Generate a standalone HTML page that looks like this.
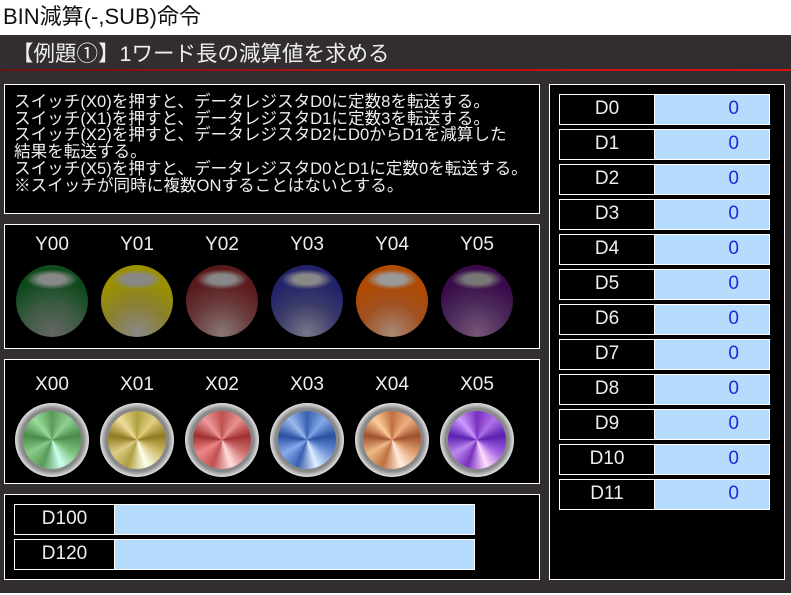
<!DOCTYPE html>
<html><head><meta charset="utf-8"><style>
*{margin:0;padding:0;box-sizing:border-box}
body{width:791px;height:595px;background:#fff;position:relative;overflow:hidden;font-family:"Liberation Sans","Noto Sans CJK JP",sans-serif}
.a{position:absolute}
#top{left:3px;top:3px;font-size:22px;color:#111;line-height:28px}
#bar{left:0;top:35px;width:791px;height:558px;background:#312d30}
#h{left:12px;top:40px;font-size:21.5px;color:#eee;line-height:28px}
#red{left:0;top:69px;width:791px;height:2px;background:linear-gradient(90deg,#6a1010,#b01010 40%,#e01010)}
.p{background:#000;border:1.5px solid #fff}
#txt{left:14px;top:94px;color:#eee;font-size:16.6px;line-height:16.7px;white-space:pre}
.lab{color:#eee;font-size:19px;text-align:center;width:72px}
.lamp{width:72px;height:72px;border-radius:50%}
.btn{width:74px;height:74px;border-radius:50%;background:radial-gradient(circle,#888 60%,#eee 72%,#999 82%,#555 100%)}
.btn i{position:absolute;left:8px;top:8px;width:58px;height:58px;border-radius:50%}
.row{position:absolute;height:31px;border:1.5px solid #fff;background:#b5dcfd}
.row b{position:absolute;left:0;top:0;bottom:0;background:#000;color:#eee;font-weight:normal;font-size:19px;line-height:28px;text-align:center;border-right:1.5px solid #fff}
.row s{position:absolute;right:30px;top:0;text-decoration:none;color:#1a2adc;font-size:19px;line-height:28px}
</style></head><body>
<div class="a" id="top">BIN減算(-,SUB)命令</div>
<div class="a" id="bar"></div>
<div class="a" id="h">【例題①】1ワード長の減算値を求める</div>
<div class="a" id="red"></div>
<div class="a p" style="left:4px;top:84px;width:536px;height:130px"></div>
<div class="a" id="txt">スイッチ(X0)を押すと、データレジスタD0に定数8を転送する。
スイッチ(X1)を押すと、データレジスタD1に定数3を転送する。
スイッチ(X2)を押すと、データレジスタD2にD0からD1を減算した
結果を転送する。
スイッチ(X5)を押すと、データレジスタD0とD1に定数0を転送する。
※スイッチが同時に複数ONすることはないとする。</div>
<div class="a p" style="left:4px;top:224px;width:536px;height:125px"></div>
<div class="a p" style="left:4px;top:359px;width:536px;height:125px"></div>
<div class="a p" style="left:4px;top:494px;width:536px;height:86px"></div>
<div class="a p" style="left:549px;top:84px;width:236px;height:496px"></div>

<div class="a lab" style="left:16px;top:234px">Y00</div>
<div class="a lab" style="left:101px;top:234px">Y01</div>
<div class="a lab" style="left:186px;top:234px">Y02</div>
<div class="a lab" style="left:271px;top:234px">Y03</div>
<div class="a lab" style="left:356px;top:234px">Y04</div>
<div class="a lab" style="left:441px;top:234px">Y05</div>
<div class="a lamp" style="left:16px;top:265px;background:radial-gradient(ellipse 26px 10px at 50% 20%,#888 50%,transparent 100%),radial-gradient(circle at 50% 95%,#666,#3a5a40 40%,#0d4a1c 70%)"></div>
<div class="a lamp" style="left:101px;top:265px;background:radial-gradient(ellipse 26px 10px at 50% 20%,#888 50%,transparent 100%),radial-gradient(circle at 50% 95%,#888,#8a8030 40%,#9a9000 70%)"></div>
<div class="a lamp" style="left:186px;top:265px;background:radial-gradient(ellipse 26px 10px at 50% 20%,#888 50%,transparent 100%),radial-gradient(circle at 50% 95%,#877,#6a3a3a 40%,#5a1a1c 70%)"></div>
<div class="a lamp" style="left:271px;top:265px;background:radial-gradient(ellipse 26px 10px at 50% 20%,#888 50%,transparent 100%),radial-gradient(circle at 50% 95%,#778,#3a3a6a 40%,#22226a 70%)"></div>
<div class="a lamp" style="left:356px;top:265px;background:radial-gradient(ellipse 26px 10px at 50% 20%,#999 50%,transparent 100%),radial-gradient(circle at 50% 95%,#a87,#a05020 40%,#b04a00 70%)"></div>
<div class="a lamp" style="left:441px;top:265px;background:radial-gradient(ellipse 26px 10px at 50% 20%,#777 50%,transparent 100%),radial-gradient(circle at 50% 95%,#757,#4a2a5a 40%,#3a0a4a 70%)"></div>

<div class="a lab" style="left:16px;top:374px">X00</div>
<div class="a lab" style="left:101px;top:374px">X01</div>
<div class="a lab" style="left:186px;top:374px">X02</div>
<div class="a lab" style="left:271px;top:374px">X03</div>
<div class="a lab" style="left:356px;top:374px">X04</div>
<div class="a lab" style="left:441px;top:374px">X05</div>
<div class="a btn" style="left:15px;top:403px"><i style="background:conic-gradient(#5a9a5a,#90d090,#4a8a4a,#7ac07a,#cfe,#5a9a5a,#8c8,#4a8a4a,#9d9,#5a9a5a)"></i></div>
<div class="a btn" style="left:100px;top:403px"><i style="background:conic-gradient(#b0a040,#e0d080,#907a20,#d0c070,#ffe,#b0a040,#dc8,#907a20,#ed9,#b0a040)"></i></div>
<div class="a btn" style="left:185px;top:403px"><i style="background:conic-gradient(#c05050,#e89090,#a03030,#d07070,#fdd,#c05050,#e88,#a03030,#e99,#c05050)"></i></div>
<div class="a btn" style="left:270px;top:403px"><i style="background:conic-gradient(#3a60b0,#80a8e8,#2a50a0,#6a90d8,#def,#3a60b0,#8ae,#2a50a0,#9be,#3a60b0)"></i></div>
<div class="a btn" style="left:355px;top:403px"><i style="background:conic-gradient(#c07040,#f0b080,#a05030,#e0a070,#fed,#c07040,#eb8,#a05030,#fc9,#c07040)"></i></div>
<div class="a btn" style="left:440px;top:403px"><i style="background:conic-gradient(#7a30c0,#b070e8,#5a20b0,#a060e0,#fdf,#7a30c0,#b8e,#5a20b0,#c9f,#7a30c0)"></i></div>

<div class="row" style="left:14px;top:504px;width:461px"><b style="width:100px">D100</b></div>
<div class="row" style="left:14px;top:539px;width:461px"><b style="width:100px">D120</b></div>

<div class="row" style="left:559px;top:94px;width:211px"><b style="width:95px">D0</b><s>0</s></div>
<div class="row" style="left:559px;top:129px;width:211px"><b style="width:95px">D1</b><s>0</s></div>
<div class="row" style="left:559px;top:164px;width:211px"><b style="width:95px">D2</b><s>0</s></div>
<div class="row" style="left:559px;top:199px;width:211px"><b style="width:95px">D3</b><s>0</s></div>
<div class="row" style="left:559px;top:234px;width:211px"><b style="width:95px">D4</b><s>0</s></div>
<div class="row" style="left:559px;top:269px;width:211px"><b style="width:95px">D5</b><s>0</s></div>
<div class="row" style="left:559px;top:304px;width:211px"><b style="width:95px">D6</b><s>0</s></div>
<div class="row" style="left:559px;top:339px;width:211px"><b style="width:95px">D7</b><s>0</s></div>
<div class="row" style="left:559px;top:374px;width:211px"><b style="width:95px">D8</b><s>0</s></div>
<div class="row" style="left:559px;top:409px;width:211px"><b style="width:95px">D9</b><s>0</s></div>
<div class="row" style="left:559px;top:444px;width:211px"><b style="width:95px">D10</b><s>0</s></div>
<div class="row" style="left:559px;top:479px;width:211px"><b style="width:95px">D11</b><s>0</s></div>
</body></html>
